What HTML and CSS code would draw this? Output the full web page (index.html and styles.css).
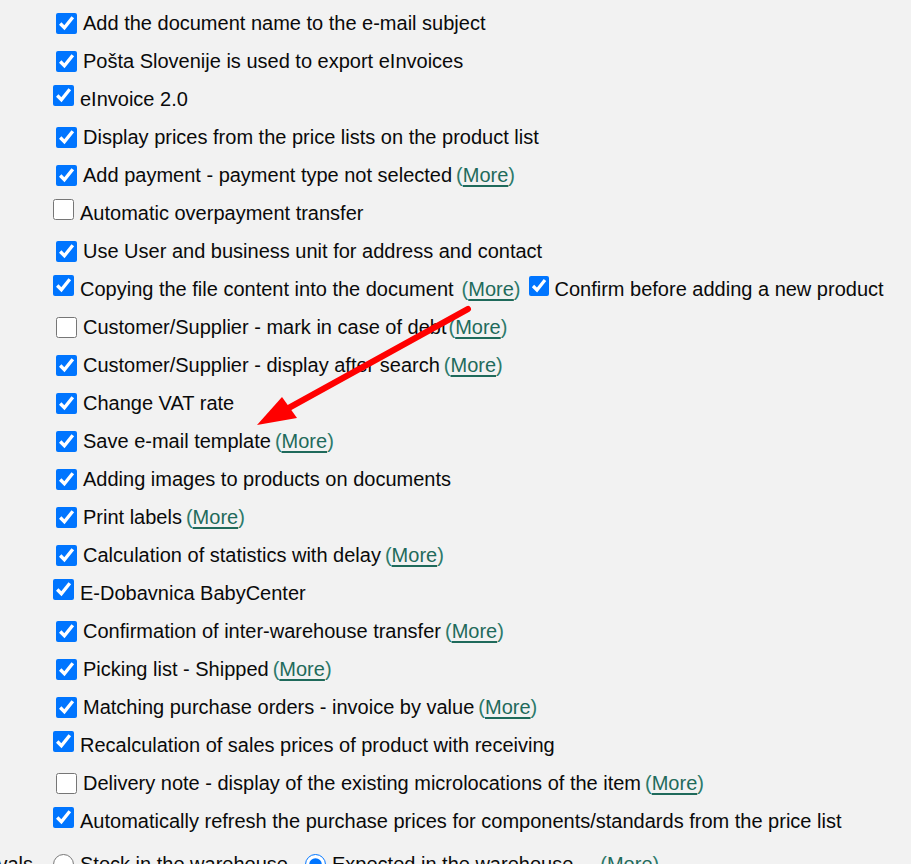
FILE: index.html
```html
<!DOCTYPE html>
<html>
<head>
<meta charset="utf-8">
<link rel="stylesheet" href="styles.css">
</head>
<body>
<div class="page">
  <div class="list">
    <div class="row ind"><input type="checkbox" checked><span>Add the document name to the e-mail subject</span></div>
    <div class="row ind"><input type="checkbox" checked><span>Pošta Slovenije is used to export eInvoices</span></div>
    <div class="row flush"><input type="checkbox" checked><span>eInvoice 2.0</span></div>
    <div class="row ind"><input type="checkbox" checked><span>Display prices from the price lists on the product list</span></div>
    <div class="row ind"><input type="checkbox" checked><span>Add payment - payment type not selected</span><span class="more">(<a href="#">More</a>)</span></div>
    <div class="row flush"><input type="checkbox"><span>Automatic overpayment transfer</span></div>
    <div class="row ind"><input type="checkbox" checked><span>Use User and business unit for address and contact</span></div>
    <div class="row flush"><input type="checkbox" checked><span>Copying the file content into the document</span><span class="more wide">(<a href="#">More</a>)</span><input class="second" type="checkbox" checked><span>Confirm before adding a new product</span></div>
    <div class="row ind"><input type="checkbox"><span>Customer/Supplier - mark in case of debt</span><span class="more tight">(<a href="#">More</a>)</span></div>
    <div class="row ind"><input type="checkbox" checked><span>Customer/Supplier - display after search</span><span class="more">(<a href="#">More</a>)</span></div>
    <div class="row ind"><input type="checkbox" checked><span>Change VAT rate</span></div>
    <div class="row ind"><input type="checkbox" checked><span>Save e-mail template</span><span class="more">(<a href="#">More</a>)</span></div>
    <div class="row ind"><input type="checkbox" checked><span>Adding images to products on documents</span></div>
    <div class="row ind"><input type="checkbox" checked><span>Print labels</span><span class="more">(<a href="#">More</a>)</span></div>
    <div class="row ind"><input type="checkbox" checked><span>Calculation of statistics with delay</span><span class="more">(<a href="#">More</a>)</span></div>
    <div class="row flush"><input type="checkbox" checked><span>E-Dobavnica BabyCenter</span></div>
    <div class="row ind"><input type="checkbox" checked><span>Confirmation of inter-warehouse transfer</span><span class="more">(<a href="#">More</a>)</span></div>
    <div class="row ind"><input type="checkbox" checked><span>Picking list - Shipped</span><span class="more">(<a href="#">More</a>)</span></div>
    <div class="row ind"><input type="checkbox" checked><span>Matching purchase orders - invoice by value</span><span class="more">(<a href="#">More</a>)</span></div>
    <div class="row flush"><input type="checkbox" checked><span>Recalculation of sales prices of product with receiving</span></div>
    <div class="row ind"><input type="checkbox"><span>Delivery note - display of the existing microlocations of the item</span><span class="more">(<a href="#">More</a>)</span></div>
    <div class="row flush"><input type="checkbox" checked><span>Automatically refresh the purchase prices for components/standards from the price list</span></div>
    <div class="row radios">
      <div class="label"><span>Stock display intervals</span></div>
      <input type="radio" name="st"><span class="opt1">Stock in the warehouse</span>
      <input type="radio" name="st" checked><span>Expected in the warehouse</span><span class="more far">(<a href="#">More</a>)</span>
    </div>
  </div>
  <svg class="arrow" width="911" height="864" viewBox="0 0 911 864">
    <line x1="468" y1="309" x2="285" y2="410" stroke="#ff0000" stroke-width="6" stroke-linecap="round"/>
    <polygon points="257,425 282,397 297,418" fill="#ff0000"/>
  </svg>
</div>
</body>
</html>
```

FILE: styles.css
```css
html, body {
  margin: 0;
  padding: 0;
  background: #f2f2f2;
  overflow: hidden;
}
.page {
  position: relative;
  width: 911px;
  height: 864px;
  overflow: hidden;
}
.list {
  display: flex;
  flex-direction: column;
  padding-top: 4px;
  font-family: "Liberation Sans", Arial, sans-serif;
  font-size: 20px;
  color: #0a0a0a;
}
.row {
  display: flex;
  align-items: center;
  height: 38px;
  white-space: nowrap;
  flex: none;
}
.row input {
  width: 21px;
  height: 21px;
  margin: 0 6px 0 0;
  flex: none;
}
.row.ind {
  padding-left: 56px;
}
.row.flush {
  padding-left: 53px;
}
.row.flush > input:first-child {
  margin-bottom: 7px;
}
.row.flush > input.second {
  width: 20px;
  height: 20px;
  margin: 0 6px 7px 8px;
}
.more {
  margin-left: 4px;
  color: #2d7a6b;
}
.more.tight {
  margin-left: 2px;
}
.more.wide {
  margin-left: 8px;
}
.more.far {
  margin-left: 27px;
}
.more a {
  color: #1f6a5b;
  text-decoration: underline;
  text-decoration-thickness: 2px;
  text-underline-offset: 3px;
}
.row.radios {
  padding-left: 0;
  margin-top: 5px;
}
.radios .label {
  width: 33px;
  margin-right: 20px;
  display: flex;
  justify-content: flex-end;
}
.radios .label span {
  flex: none;
}
.radios input {
  margin-right: 6px;
}
.radios .opt1 {
  width: 225px;
}
.arrow {
  position: absolute;
  left: 0;
  top: 0;
  pointer-events: none;
}
```
